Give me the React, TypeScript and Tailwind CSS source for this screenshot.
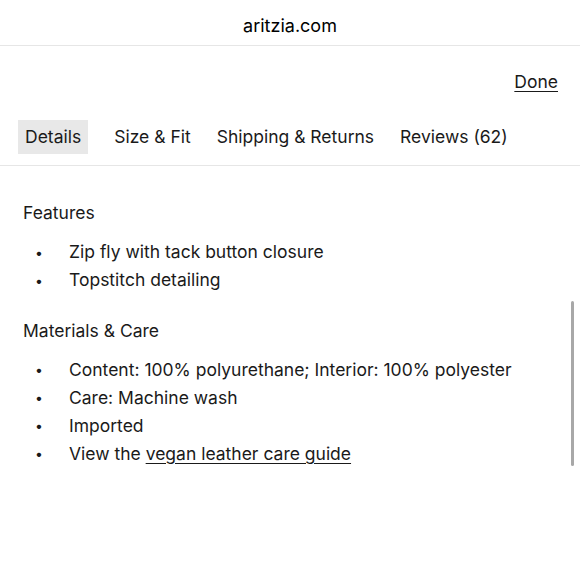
export default function App() {
  const features = ['Zip fly with tack button closure', 'Topstitch detailing'];
  const materials = [
    'Content: 100% polyurethane; Interior: 100% polyester',
    'Care: Machine wash',
    'Imported',
  ];

  return (
    <div
      className="relative w-[580px] h-[580px] overflow-hidden bg-white text-[#1a1a1a]"
      style={{ fontFamily: 'Inter, "Noto Sans", sans-serif' }}
    >
      {/* Browser bar */}
      <div className="h-[46px] pt-[6px] flex items-center justify-center border-b border-[#e6e6e6] text-[18px] text-black">
        aritzia.com
      </div>

      {/* Done */}
      <div className="flex justify-end pr-[22px] pt-[23px]">
        <button className="text-[17.5px] underline underline-offset-[3px]">Done</button>
      </div>

      {/* Tabs */}
      <div className="mt-[25px] flex items-center gap-[26px] px-[18px] pb-[11px] border-b border-[#e6e6e6] text-[17.5px]">
        <div className="bg-[#e8e8e8] h-[34px] px-[7px] flex items-center">Details</div>
        <div>Size &amp; Fit</div>
        <div>Shipping &amp; Returns</div>
        <div>Reviews (62)</div>
      </div>

      {/* Content */}
      <div className="px-[23px] pt-[34px] text-[17.5px]">
        <h3>Features</h3>
        <ul className="mt-[15px] flex flex-col gap-[6px]">
          {features.map((f) => (
            <li key={f} className="flex items-center h-[22px]">
              <span className="w-[46px] pl-[12px] text-[14px]">•</span>
              <span>{f}</span>
            </li>
          ))}
        </ul>

        <h3 className="mt-[26px]">Materials &amp; Care</h3>
        <ul className="mt-[15px] flex flex-col gap-[6px]">
          {materials.map((f) => (
            <li key={f} className="flex items-center h-[22px]">
              <span className="w-[46px] pl-[12px] text-[14px]">•</span>
              <span>{f}</span>
            </li>
          ))}
          <li className="flex items-center h-[22px]">
            <span className="w-[46px] pl-[12px] text-[14px]">•</span>
            <span>
              View the{' '}
              <a className="underline underline-offset-[3px]">vegan leather care guide</a>
            </span>
          </li>
        </ul>
      </div>

      {/* Scrollbar */}
      <div className="absolute left-[571px] top-[301px] w-[3px] h-[165px] rounded-full bg-[#a8a8a8]" />
    </div>
  );
}
